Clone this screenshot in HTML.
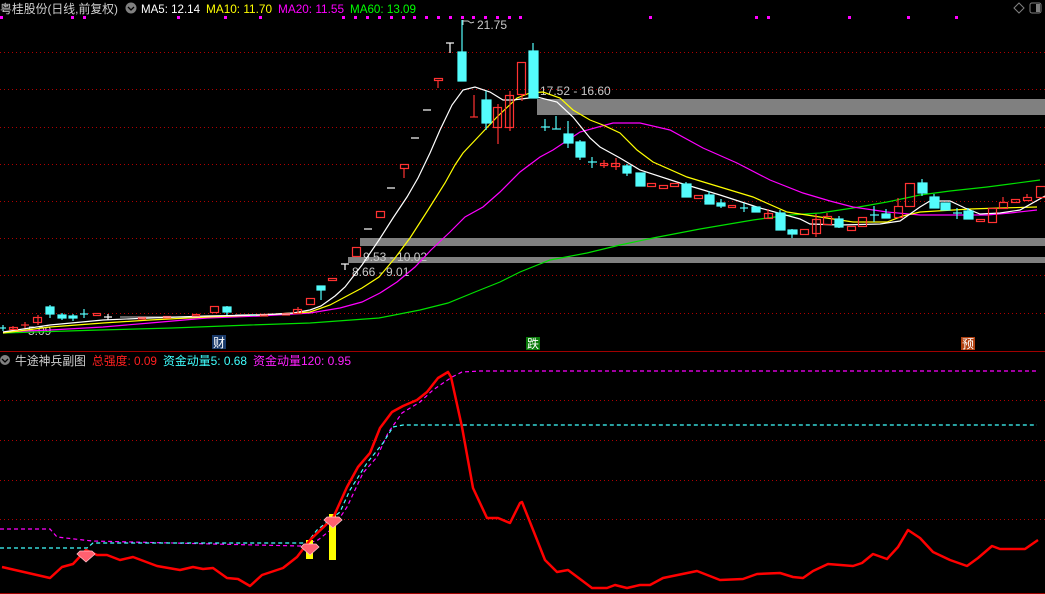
<!DOCTYPE html>
<html><head><meta charset="utf-8"><style>
html,body{margin:0;padding:0;background:#000;width:1045px;height:594px;overflow:hidden}
svg{display:block}
text{font-family:"Liberation Sans","Noto Sans CJK SC",sans-serif;font-size:12px}
</style></head><body>
<svg width="1045" height="594" viewBox="0 0 1045 594" xmlns="http://www.w3.org/2000/svg">
<rect width="1045" height="594" fill="#000"/>
<!-- header -->
<text x="0" y="13" fill="#d0d0d0" textLength="118" lengthAdjust="spacingAndGlyphs">粤桂股份(日线,前复权)</text>
<circle cx="131" cy="8" r="5.5" fill="#808080"/><path d="M128 7 L131 10 L134 7" stroke="#000" stroke-width="1.3" fill="none"/>
<text x="141" y="13" fill="#fff" textLength="59" lengthAdjust="spacingAndGlyphs">MA5: 12.14</text>
<text x="206" y="13" fill="#ffff00" textLength="66" lengthAdjust="spacingAndGlyphs">MA10: 11.70</text>
<text x="278" y="13" fill="#ff00ff" textLength="66" lengthAdjust="spacingAndGlyphs">MA20: 11.55</text>
<text x="350" y="13" fill="#00ff00" textLength="66" lengthAdjust="spacingAndGlyphs">MA60: 13.09</text>
<path d="M1019 3 L1024 8 L1019 13 L1014 8 Z" stroke="#808080" fill="none"/>
<rect x="1030" y="3" width="11" height="10" rx="2" stroke="#808080" fill="none"/><rect x="1036" y="4" width="4" height="8" fill="#808080"/>
<!-- magenta dots -->
<g fill="#ff00ff">
<rect x="0" y="16" width="3" height="3"/><rect x="71" y="16" width="3" height="3"/><rect x="83" y="16" width="3" height="3"/><rect x="177" y="16" width="3" height="3"/><rect x="224" y="16" width="3" height="3"/><rect x="259" y="16" width="3" height="3"/>
<rect x="342" y="16" width="3" height="3"/><rect x="354" y="16" width="3" height="3"/><rect x="366" y="16" width="3" height="3"/><rect x="378" y="16" width="3" height="3"/><rect x="390" y="16" width="3" height="3"/><rect x="402" y="16" width="3" height="3"/><rect x="413" y="16" width="3" height="3"/><rect x="425" y="16" width="3" height="3"/><rect x="437" y="16" width="3" height="3"/><rect x="449" y="16" width="3" height="3"/><rect x="461" y="16" width="3" height="3"/><rect x="472" y="16" width="3" height="3"/><rect x="484" y="16" width="3" height="3"/><rect x="496" y="16" width="3" height="3"/><rect x="508" y="16" width="3" height="3"/><rect x="519" y="16" width="3" height="3"/>
<rect x="649" y="16" width="3" height="3"/><rect x="755" y="16" width="3" height="3"/><rect x="767" y="16" width="3" height="3"/><rect x="848" y="16" width="3" height="3"/><rect x="907" y="16" width="3" height="3"/><rect x="955" y="16" width="3" height="3"/>
</g>
<!-- grid -->
<g stroke="#b00000" stroke-width="1" stroke-dasharray="1,3">
<line x1="0" y1="52.5" x2="1045" y2="52.5"/><line x1="0" y1="89.5" x2="1045" y2="89.5"/><line x1="0" y1="127.5" x2="1045" y2="127.5"/><line x1="0" y1="164.5" x2="1045" y2="164.5"/><line x1="0" y1="201.5" x2="1045" y2="201.5"/><line x1="0" y1="238.5" x2="1045" y2="238.5"/><line x1="0" y1="275.5" x2="1045" y2="275.5"/><line x1="0" y1="313.5" x2="1045" y2="313.5"/>
<line x1="0" y1="400.5" x2="1045" y2="400.5"/><line x1="0" y1="440.5" x2="1045" y2="440.5"/><line x1="0" y1="480.5" x2="1045" y2="480.5"/><line x1="0" y1="519.5" x2="1045" y2="519.5"/>
</g>
<line x1="0" y1="351.5" x2="1045" y2="351.5" stroke="#a00000"/>
<line x1="0" y1="593.5" x2="1045" y2="593.5" stroke="#a00000"/>
<!-- gray bands -->
<rect x="537" y="99" width="508" height="16" fill="#808080"/>
<rect x="360" y="238" width="685" height="8" fill="#808080"/>
<rect x="348" y="257" width="697" height="6" fill="#808080"/>
<g fill="#c8c8c8">
<text x="540" y="95">17.52 - 16.60</text>
<text x="363" y="261">9.53 - 10.02</text>
<text x="352" y="276">8.66 - 9.01</text>
<text x="477" y="29">21.75</text>
<text x="28" y="335">5.09</text>
</g>
<path d="M463 20 L463 25 M463 21 L468 21 L471 23 L474 22" stroke="#c8c8c8" fill="none"/>
<!-- MA lines -->
<polyline fill="none" stroke="#00e000" stroke-width="1.2" points="3,333 100,330 172,328 250,325 310,323 379,318 420,310 448,303 475,292 500,282 520,272 550,260 587,253 620,245 653,238 700,229 753,220 790,215 820,213 853,208 887,202 920,195 950,191 987,187 1010,184 1040,180"/>
<polyline fill="none" stroke="#ff00ff" stroke-width="1.2" points="3,332 50,330 103,327 150,323 207,318 260,316 310,313 340,308 362,302 380,293 397,282 415,267 431,250 450,232 465,217 483,207 500,192 520,172 540,157 553,150 580,132 613,123 640,123 670,130 703,148 737,163 770,180 803,193 830,201 853,207 887,212 920,215 987,215 1010,213 1037,210"/>
<polyline fill="none" stroke="#ffff00" stroke-width="1.2" points="3,333 50,327 103,323 150,320 207,317 260,315 310,312 330,305 345,297 362,288 379,277 395,258 410,238 428,210 445,183 455,165 463,153 480,135 497,117 517,98 530,93 543,92 560,98 573,110 590,120 603,125 620,133 637,150 653,162 687,177 720,187 753,197 787,212 820,217 853,222 887,222 903,216 920,212 970,209 1000,208 1037,207"/>
<polyline fill="none" stroke="#ffffff" stroke-width="1.2" points="3,332 50,325 103,320 150,318 207,316 260,315 293,313 310,310 321,306 335,296 345,287 362,265 379,240 393,218 407,197 418,178 430,153 440,130 452,105 463,90 475,87 490,92 503,100 513,100 537,97 557,102 573,117 590,138 600,147 620,158 640,170 680,183 720,195 760,208 800,219 810,224 840,225 880,224 900,221 920,207 930,201 950,201 965,208 980,214 1000,213 1020,210 1045,196"/>
<!-- candles: up red hollow, down cyan -->
<g stroke="#ff3232" fill="none" stroke-width="1.2">
<line x1="13" y1="326" x2="13" y2="330"/><rect x="9.5" y="327.5" width="8" height="2"/>
<line x1="21" y1="325" x2="29" y2="325"/><line x1="25" y1="322" x2="25" y2="328"/>
<line x1="38" y1="315" x2="38" y2="325"/><rect x="33.5" y="317.5" width="8" height="5"/>
<rect x="93.5" y="313.5" width="7" height="2"/>
<rect x="138.5" y="317.5" width="7" height="1.5"/><rect x="163.5" y="316.5" width="7" height="1.5"/><rect x="192.5" y="314.5" width="7" height="1.5"/>
<rect x="210.5" y="306.5" width="8" height="6"/>
<rect x="260.5" y="314.5" width="7" height="1.5"/><rect x="282.5" y="313.5" width="7" height="1.5"/>
<line x1="298" y1="307" x2="298" y2="313"/><rect x="293.5" y="309.5" width="8" height="4"/>
<rect x="306.5" y="298.5" width="8" height="6"/>
<rect x="328.5" y="278.5" width="8" height="2"/>
<rect x="352.5" y="247.5" width="8" height="9"/>
<rect x="376.5" y="211.5" width="8" height="6"/>
<line x1="404" y1="169" x2="404" y2="178"/><rect x="400.5" y="164.5" width="8" height="4"/>
<line x1="438" y1="81" x2="438" y2="88"/><rect x="434.5" y="78.5" width="8" height="2"/>
<line x1="474" y1="95" x2="474" y2="117"/><line x1="470" y1="117" x2="478" y2="117"/>
<line x1="498" y1="104" x2="498" y2="144"/><rect x="493.5" y="107.5" width="8" height="20"/>
<line x1="510" y1="91" x2="510" y2="131"/><rect x="505.5" y="95.5" width="8" height="32"/>
<line x1="522" y1="94" x2="522" y2="101"/><rect x="517.5" y="62.5" width="8" height="32"/>
<line x1="604" y1="160" x2="604" y2="168"/><rect x="600.5" y="163.5" width="7" height="2"/>
<line x1="616" y1="158" x2="616" y2="170"/><rect x="611.5" y="163.5" width="8" height="3"/>
<rect x="647.5" y="183.5" width="8" height="3"/><rect x="659.5" y="185.5" width="8" height="3"/><rect x="670.5" y="183.5" width="8" height="3"/>
<rect x="694.5" y="195.5" width="8" height="3"/><rect x="728.5" y="205.5" width="7" height="2"/>
<line x1="768" y1="209" x2="768" y2="218"/><rect x="764.5" y="213.5" width="8" height="5"/>
<rect x="800.5" y="229.5" width="8" height="5"/>
<line x1="816" y1="214" x2="816" y2="237"/><rect x="812.5" y="219.5" width="8" height="14"/>
<line x1="827" y1="213" x2="827" y2="216"/><rect x="823.5" y="216.5" width="8" height="8"/>
<rect x="847.5" y="226.5" width="8" height="4"/><rect x="858.5" y="217.5" width="8" height="9"/>
<line x1="898" y1="198" x2="898" y2="206"/><rect x="894.5" y="206.5" width="8" height="11"/>
<rect x="905.5" y="183.5" width="9" height="23"/>
<rect x="976.5" y="219.5" width="8" height="2"/>
<rect x="988.5" y="208.5" width="8" height="14"/>
<line x1="1003" y1="197" x2="1003" y2="202"/><rect x="999.5" y="202.5" width="8" height="6"/>
<rect x="1011.5" y="199.5" width="8" height="3"/>
<line x1="1027" y1="194" x2="1027" y2="197"/><rect x="1023.5" y="197.5" width="8" height="3"/>
<rect x="1036.5" y="186.5" width="9" height="11"/>
</g>
<g stroke="#54fcfc" fill="#54fcfc" stroke-width="1.2">
<line x1="0" y1="328" x2="6" y2="328"/><line x1="3" y1="325" x2="3" y2="331"/>
<line x1="50" y1="305" x2="50" y2="318"/><rect x="46" y="307" width="8" height="7"/>
<line x1="62" y1="313" x2="62" y2="320"/><rect x="58" y="315" width="8" height="3"/>
<line x1="73" y1="314" x2="73" y2="321"/><rect x="69" y="316" width="8" height="2"/>
<line x1="80" y1="314" x2="88" y2="314"/><line x1="84" y1="309" x2="84" y2="318"/>
<line x1="227" y1="306" x2="227" y2="315"/><rect x="223" y="307" width="8" height="5"/>
<line x1="250" y1="315" x2="256" y2="315"/>
<line x1="321" y1="290" x2="321" y2="300"/><rect x="317" y="286" width="8" height="4"/>
<line x1="462" y1="20" x2="462" y2="52"/><rect x="458" y="52" width="8" height="29"/>
<line x1="486" y1="91" x2="486" y2="130"/><rect x="482" y="100" width="9" height="23"/>
<line x1="533" y1="43" x2="533" y2="51"/><rect x="529" y="51" width="9" height="47"/>
<line x1="541" y1="127" x2="550" y2="127"/><line x1="545" y1="119" x2="545" y2="131"/>
<line x1="552" y1="129" x2="561" y2="129"/><line x1="556" y1="116" x2="556" y2="129"/>
<line x1="568" y1="121" x2="568" y2="148"/><rect x="564" y="134" width="9" height="9"/>
<line x1="580" y1="140" x2="580" y2="160"/><rect x="576" y="142" width="9" height="15"/>
<line x1="588" y1="162" x2="597" y2="162"/><line x1="592" y1="157" x2="592" y2="168"/>
<line x1="627" y1="164" x2="627" y2="176"/><rect x="623" y="166" width="8" height="7"/>
<rect x="636" y="173" width="9" height="13"/>
<line x1="686" y1="182" x2="686" y2="197"/><rect x="682" y="184" width="9" height="13"/>
<line x1="709" y1="191" x2="709" y2="204"/><rect x="705" y="195" width="9" height="9"/>
<line x1="721" y1="199" x2="721" y2="208"/><rect x="717" y="203" width="8" height="3"/>
<line x1="740" y1="208" x2="748" y2="208"/><line x1="744" y1="203" x2="744" y2="212"/>
<rect x="752" y="207" width="8" height="5"/>
<line x1="780" y1="210" x2="780" y2="230"/><rect x="776" y="213" width="9" height="17"/>
<line x1="792" y1="229" x2="792" y2="238"/><rect x="788" y="230" width="9" height="4"/>
<line x1="839" y1="216" x2="839" y2="228"/><rect x="835" y="219" width="8" height="8"/>
<line x1="870" y1="215" x2="879" y2="215"/><line x1="874" y1="206" x2="874" y2="222"/>
<line x1="886" y1="209" x2="886" y2="218"/><rect x="882" y="214" width="8" height="4"/>
<line x1="922" y1="179" x2="922" y2="196"/><rect x="918" y="183" width="9" height="10"/>
<line x1="934" y1="194" x2="934" y2="208"/><rect x="930" y="197" width="9" height="11"/>
<rect x="941" y="203" width="9" height="7"/>
<line x1="953" y1="213" x2="962" y2="213"/><line x1="957" y1="208" x2="957" y2="219"/>
<line x1="968" y1="208" x2="968" y2="219"/><rect x="964" y="211" width="9" height="8"/>
</g>
<g stroke="#ffffff" stroke-width="1.2" fill="none">
<line x1="104" y1="317" x2="112" y2="317"/><line x1="108" y1="314" x2="108" y2="320"/>
<line x1="120" y1="317" x2="200" y2="317" stroke="#ffffff" stroke-opacity=".6"/>
<line x1="235" y1="315" x2="290" y2="314" stroke-opacity=".6"/>
<line x1="341" y1="264" x2="349" y2="264"/><line x1="345" y1="264" x2="345" y2="270"/>
<line x1="364" y1="229" x2="372" y2="229"/><line x1="387" y1="188" x2="395" y2="188"/>
<line x1="411" y1="138" x2="419" y2="138"/><line x1="423" y1="110" x2="431" y2="110"/>
<line x1="446" y1="43" x2="454" y2="43"/><line x1="450" y1="43" x2="450" y2="53"/>
</g>
<!-- markers -->
<rect x="212" y="335" width="14" height="14" fill="#1a3a6a"/><text x="213" y="347" fill="#fff">财</text>
<rect x="526" y="337" width="14" height="13" fill="#0a7a0a"/><text x="527" y="348" fill="#fff">跌</text>
<rect x="961" y="337" width="14" height="13" fill="#b04010"/><text x="962" y="348" fill="#fff">预</text>
<!-- lower header -->
<circle cx="5" cy="360" r="5" fill="#808080"/><path d="M2 359 L5 362 L8 359" stroke="#000" stroke-width="1.3" fill="none"/>
<text x="15" y="365" fill="#d0d0d0" textLength="71" lengthAdjust="spacingAndGlyphs">牛途神兵副图</text>
<text x="92" y="365" fill="#ff2020" textLength="65" lengthAdjust="spacingAndGlyphs">总强度: 0.09</text>
<text x="163" y="365" fill="#40ffff" textLength="84" lengthAdjust="spacingAndGlyphs">资金动量5: 0.68</text>
<text x="253" y="365" fill="#ff20ff" textLength="98" lengthAdjust="spacingAndGlyphs">资金动量120: 0.95</text>
<!-- lower lines -->
<polyline fill="none" stroke="#ff00ff" stroke-width="1.2" stroke-dasharray="4,3" points="0,529 50,529 57,537 92,541 213,544 300,546 318,540 333,528 347,507 363,473 377,457 388,433 402,413 420,402 433,390 452,377 462,372 480,371 1037,371"/>
<polyline fill="none" stroke="#40ffff" stroke-width="1.2" stroke-dasharray="4,3" points="0,548 87,548 93,543 307,543 317,530 340,512 350,490 367,463 383,443 393,427 403,425 1037,425"/>
<rect x="306" y="540" width="7" height="19" fill="#ffff00"/>
<rect x="329" y="514" width="7" height="46" fill="#ffff00"/>
<polyline fill="none" stroke="#ff0000" stroke-width="2.5" stroke-linejoin="round" points="2,567 50,578 62,567 73,564 86,550 97,555 107,555 120,560 133,557 157,566 180,570 193,567 203,569 213,568 227,578 238,579 250,586 262,575 283,568 297,557 310,540 333,518 347,487 358,467 370,453 380,428 392,412 403,406 417,400 427,392 438,378 448,372 451,377 462,427 473,488 487,518 498,518 510,523 520,503 522,502 545,560 557,572 568,570 592,588 607,588 615,585 627,588 640,585 650,585 663,578 697,571 720,580 743,579 757,574 780,573 793,577 803,578 813,571 828,564 853,566 862,563 873,554 887,559 898,547 908,530 920,538 933,552 950,560 967,566 978,558 992,546 1000,549 1025,549 1038,540"/>
<g fill="#ff6070" stroke="#ffc0c8" stroke-width="0.8">
<path d="M80 551 L92 551 L95 554 L86 562 L77 554 Z"/>
<path d="M304 544 L316 544 L319 547 L310 555 L301 547 Z"/>
<path d="M327 517 L339 517 L342 520 L333 528 L324 520 Z"/>
</g>
</svg>
</body></html>
